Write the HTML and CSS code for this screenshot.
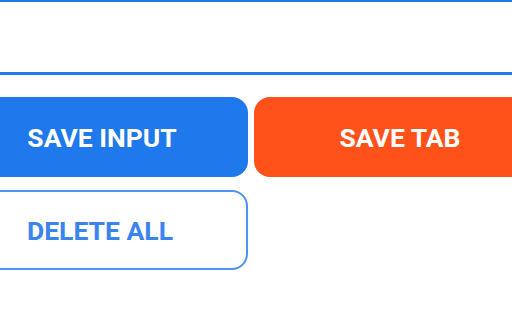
FILE: index.html
```html
<!DOCTYPE html>
<html>
<head>
<meta charset="utf-8">
<link rel="stylesheet" href="styles.css">
</head>
<body>
<div class="page">
  <div class="wrap">
    <input class="field" type="text">
    <div class="actions">
      <button class="btn btn-primary">SAVE INPUT</button>
      <button class="btn btn-accent">SAVE TAB</button>
      <button class="btn btn-outline">DELETE ALL</button>
    </div>
  </div>
</div>
</body>
</html>
```
FILE: styles.css
```css
html, body {
  margin: 0;
  padding: 0;
  background: #ffffff;
}
.page {
  width: 512px;
  height: 320px;
  overflow: hidden;
}
.wrap {
  margin-top: -1px;
  margin-left: -44px;
  width: 640px;
  display: flex;
  flex-direction: column;
}
.field {
  box-sizing: border-box;
  display: block;
  width: 640px;
  height: 76px;
  margin: 0;
  padding: 0 16px;
  border: 3px solid #1f78ec;
  background: #fff;
  outline: none;
}
.actions {
  margin-top: 22px;
  display: grid;
  grid-template-columns: 292px 292px;
  column-gap: 6px;
  row-gap: 13px;
}
.btn {
  box-sizing: border-box;
  height: 80px;
  margin: 0;
  border-radius: 16px;
  font-family: Roboto, "Liberation Sans", sans-serif;
  font-weight: 700;
  font-size: 26.5px;
  display: flex;
  align-items: center;
  justify-content: center;
  padding: 0;
}
.btn-primary {
  background: #1f78ec;
  border: none;
  color: #ffffff;
}
.btn-accent {
  background: #ff521b;
  border: none;
  color: #ffffff;
}
.btn-outline {
  background: #ffffff;
  border: 2px solid #4d93f2;
  color: #3a84ef;
  padding-right: 4px;
}
```
